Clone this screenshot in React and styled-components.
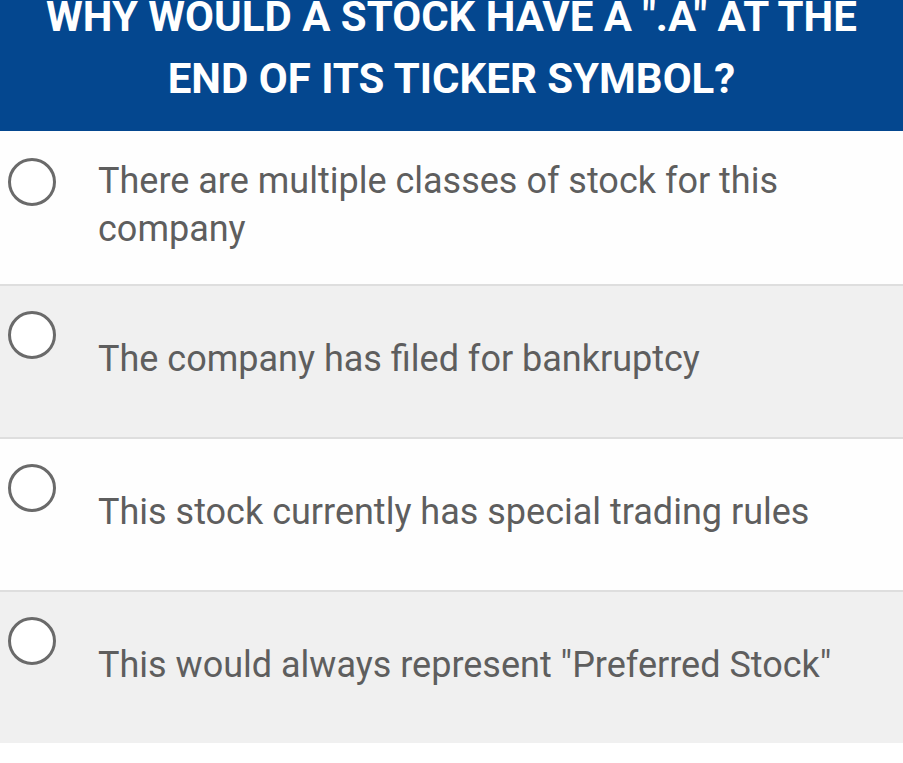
import React from "react";
import styled, { createGlobalStyle } from "styled-components";

const Global = createGlobalStyle`
  html, body { margin: 0; padding: 0; background: #ffffff; }
  body { font-family: Roboto, "Noto Sans", Arial, sans-serif; }
  * { box-sizing: border-box; }
`;

const Page = styled.div`
  width: 903px;
  min-height: 763px;
  background: #ffffff;
  overflow: hidden;
`;

const Header = styled.header`
  height: 131px;
  background: #04478f;
  display: flex;
  align-items: flex-end;
  justify-content: center;
  padding-bottom: 21px;
  overflow: hidden;
`;

const Title = styled.h1`
  margin: 0;
  color: #ffffff;
  font-family: Roboto, Arial, sans-serif;
  font-weight: 700;
  font-size: 42px;
  line-height: 62px;
  text-align: center;
  text-transform: uppercase;
  white-space: nowrap;
`;

const List = styled.div`
  display: flex;
  flex-direction: column;
`;

const Row = styled.label`
  height: 153px;
  display: flex;
  align-items: stretch;
  background: ${(p) => (p.$shaded ? "#f0f0f0" : "#fefefe")};
  border-top: ${(p) => (p.$first ? "none" : "2px solid #dedede")};
`;

const Radio = styled.span`
  flex: none;
  width: 48px;
  height: 48px;
  margin: ${(p) => (p.$first ? "27px" : "25px")} 0 0 8px;
  border: 3px solid #6a6a6a;
  border-radius: 50%;
  background: #ffffff;
`;

const Text = styled.span`
  flex: 1;
  display: flex;
  align-items: center;
  padding: 0 30px 5px 42px;
  color: #5e5e5e;
  font-family: Roboto, Arial, sans-serif;
  font-size: 36px;
  line-height: 48px;
`;

const options = [
  "There are multiple classes of stock for this company",
  "The company has filed for bankruptcy",
  "This stock currently has special trading rules",
  'This would always represent "Preferred Stock"',
];

export default function App() {
  return (
    <Page>
      <Global />
      <Header>
        <Title>
          Why would a stock have a ".A" at the
          <br />
          end of its ticker symbol?
        </Title>
      </Header>
      <List>
        {options.map((o, i) => (
          <Row key={i} $shaded={i % 2 === 1} $first={i === 0}>
            <Radio $first={i === 0} />
            <Text>{o}</Text>
          </Row>
        ))}
      </List>
    </Page>
  );
}
